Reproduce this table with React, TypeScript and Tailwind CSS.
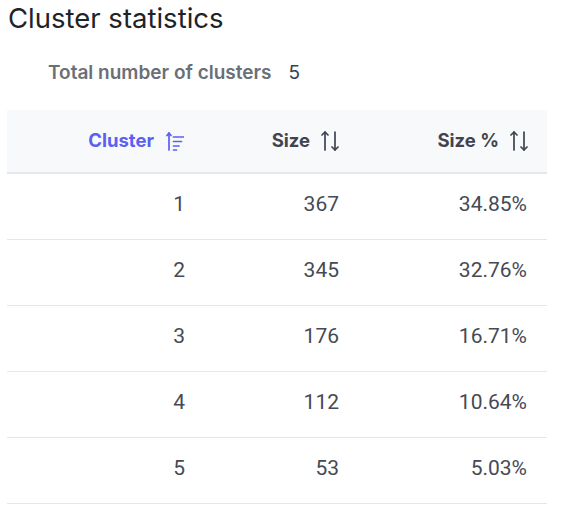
import React from 'react';

const rows = [
  { id: 1, size: 367, pct: '34.85%' },
  { id: 2, size: 345, pct: '32.76%' },
  { id: 3, size: 176, pct: '16.71%' },
  { id: 4, size: 112, pct: '10.64%' },
  { id: 5, size: 53, pct: '5.03%' },
];

const SortBoth = () => (
  <svg width="18" height="20" viewBox="0 0 18 20" fill="none" stroke="currentColor" strokeWidth="1.7" strokeLinecap="round" strokeLinejoin="round">
    <path d="M4 19V1" />
    <path d="M1 4 4 1l3 3" />
    <path d="M14 1v18" />
    <path d="M11 16l3 3 3-3" />
  </svg>
);

const SortAsc = () => (
  <svg width="18" height="19" viewBox="0 0 18 19" fill="none" stroke="currentColor" strokeWidth="1.7" strokeLinecap="round" strokeLinejoin="round">
    <path d="M3 18V1" />
    <path d="M1 3.5 3 1l2 2.5" />
    <path d="M7.5 5h10" />
    <path d="M7.5 9.5h8" />
    <path d="M7.5 14h5.5" />
    <path d="M7.5 18h3" />
  </svg>
);

export default function App() {
  return (
    <div className="bg-white w-[569px] h-[515px] px-[7px] font-['Inter',sans-serif]">
      <h1 className="text-[27.5px] leading-9 pl-[1px] text-[#1f2328] font-normal">Cluster statistics</h1>

      <div className="flex items-baseline gap-[17px] pl-[41px] mt-[23px] text-[19px] leading-7">
        <span className="font-semibold text-[#6b6f76]">Total number of clusters</span>
        <span className="text-[#374151]">5</span>
      </div>

      <div className="w-[540px] mt-[23px]">
        <div className="grid grid-cols-[198px_154px_188px] h-[64px] bg-[#f8f9fa] border-b-2 border-[#e5e7eb] text-[18.5px] font-bold text-[#3f4450]">
          <div className="flex items-center justify-end gap-[12px] pr-[21px] text-[#5b5ff2]">
            Cluster <SortAsc />
          </div>
          <div className="flex items-center justify-end gap-[11px] pr-[20px]">
            Size <SortBoth />
          </div>
          <div className="flex items-center justify-end gap-[11px] pr-[19px]">
            Size % <SortBoth />
          </div>
        </div>
        {rows.map((r) => (
          <div key={r.id} className="grid grid-cols-[198px_154px_188px] h-[66px] pb-[4px] border-b border-[#e5e7eb] text-[21px] text-[#454a54] font-['Roboto',sans-serif]">
            <div className="flex items-center justify-end pr-[20px]">{r.id}</div>
            <div className="flex items-center justify-end pr-[20px]">{r.size}</div>
            <div className="flex items-center justify-end pr-[20px]">{r.pct}</div>
          </div>
        ))}
      </div>
    </div>
  );
}
